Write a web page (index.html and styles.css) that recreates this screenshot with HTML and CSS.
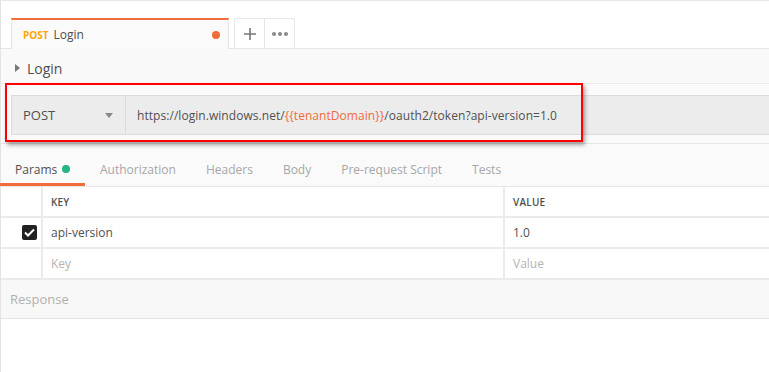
FILE: index.html
```html
<!DOCTYPE html>
<html>
  <head>
    <title>Login - Request</title>
    <link rel="stylesheet" href="styles.css">
  </head>
  <body>
    <div class="app">
      <div class="tab-strip">
        <div class="req-tab">
          <span class="method">POST</span>
          <span class="tab-name">Login</span>
          <span class="dirty"></span>
        </div>
        <div class="tab-actions">
          <span class="tab-btn">
            <svg width="14" height="14" viewBox="0 0 14 14"><path d="M7 1v12M1 7h12" stroke="#777" stroke-width="1.6"/></svg>
          </span>
          <span class="tab-btn">
            <svg width="18" height="6" viewBox="0 0 18 6"><circle cx="3" cy="3" r="2" fill="#888"/><circle cx="9" cy="3" r="2" fill="#888"/><circle cx="15" cy="3" r="2" fill="#888"/></svg>
          </span>
        </div>
      </div>

      <div class="req-name">
        <span class="caret-right"></span>
        <span>Login</span>
      </div>

      <div class="url-area">
        <div class="url-bar">
          <div class="method-select">
            <span>POST</span>
            <span class="caret-down"></span>
          </div>
          <div class="url-input">https://login.windows.net/<span class="var">{{tenantDomain}}</span>/oauth2/token?api-version=1.0</div>
        </div>
        <div class="highlight"></div>
      </div>

      <nav class="sub-tabs">
        <span class="sub-tab active">Params <i class="dot"></i></span>
        <span class="sub-tab">Authorization</span>
        <span class="sub-tab">Headers</span>
        <span class="sub-tab">Body</span>
        <span class="sub-tab">Pre-request Script</span>
        <span class="sub-tab">Tests</span>
      </nav>

      <div class="params">
        <div class="row head">
          <div class="cell check"></div>
          <div class="cell key">KEY</div>
          <div class="cell value">VALUE</div>
        </div>
        <div class="row">
          <div class="cell check">
            <span class="box">
              <svg width="11" height="9" viewBox="0 0 11 9"><path d="M1 4.5l3 3L10 1.5" stroke="#fff" stroke-width="2" fill="none"/></svg>
            </span>
          </div>
          <div class="cell key">api-version</div>
          <div class="cell value">1.0</div>
        </div>
        <div class="row">
          <div class="cell check"></div>
          <div class="cell key placeholder">Key</div>
          <div class="cell value placeholder">Value</div>
        </div>
      </div>

      <div class="response">Response</div>
    </div>
  </body>
</html>
```

FILE: styles.css
```css
html,
body {
  margin: 0;
  background: #fff;
}
body {
  font-family: "Open Sans", "Noto Sans", sans-serif;
  color: #505050;
  width: 769px;
  height: 372px;
  overflow: hidden;
}
.app {
  border-top: 1px solid #e8e8e8;
  border-left: 1px solid #e3e3e3;
  height: 371px;
}

/* tab strip */
.tab-strip {
  display: flex;
  align-items: flex-end;
  height: 47px;
  padding-left: 10px;
}
.req-tab {
  display: flex;
  align-items: center;
  box-sizing: border-box;
  width: 218px;
  height: 31px;
  padding: 0 8px 0 11px;
  background: #fafafa;
  border-top: 2px solid #f26b3a;
  border-left: 1px solid #e6e6e6;
  border-right: 1px solid #e6e6e6;
  margin-bottom: -1px;
  position: relative;
}
.method {
  color: #ffa500;
  font-size: 10px;
  font-weight: 700;
  margin-right: 5px;
}
.tab-name {
  font-size: 12px;
  flex: 1;
}
.dirty {
  width: 8px;
  height: 8px;
  border-radius: 50%;
  background: #f26b3a;
}
.tab-actions {
  display: flex;
  margin-left: 5px;
  height: 30px;
  border: 1px solid #e6e6e6;
  border-bottom: none;
  border-radius: 3px 3px 0 0;
  box-sizing: border-box;
}
.tab-btn {
  width: 29px;
  display: flex;
  align-items: center;
  justify-content: center;
}
.tab-btn + .tab-btn {
  border-left: 1px solid #e6e6e6;
}

/* request name */
.req-name {
  display: flex;
  align-items: center;
  box-sizing: border-box;
  height: 36px;
  padding: 4px 0 0 14px;
  background: #f9f9f9;
  border-top: 1px solid #e6e6e6;
  border-bottom: 1px solid #ebebeb;
  font-size: 14px;
  color: #505050;
}
.caret-right {
  width: 0;
  height: 0;
  border-top: 4px solid transparent;
  border-bottom: 4px solid transparent;
  border-left: 5px solid #777;
  margin-right: 7px;
}

/* url bar */
.url-area {
  position: relative;
  background: #fafafa;
  padding: 11px 0 8px 10px;
  border-bottom: 1px solid #e6e6e6;
}
.url-bar {
  display: flex;
  height: 38px;
  border: 1px solid #dcdcdc;
  border-right: none;
  background: #ececec;
  font-size: 12px;
}
.method-select {
  display: flex;
  align-items: center;
  justify-content: space-between;
  width: 114px;
  box-sizing: border-box;
  padding: 0 12px 0 11px;
  border-right: 1px solid #dcdcdc;
  font-size: 13px;
}
.caret-down {
  width: 0;
  height: 0;
  border-left: 4px solid transparent;
  border-right: 4px solid transparent;
  border-top: 5px solid #888;
}
.url-input {
  display: flex;
  align-items: center;
  padding-left: 11px;
  color: #505050;
  letter-spacing: 0.05px;
}
.var {
  color: #f26b3a;
}
.highlight {
  position: absolute;
  left: 4px;
  top: -1px;
  width: 578px;
  height: 59px;
  box-sizing: border-box;
  border: 2px solid #f00;
  box-shadow: 2px 3px 4px rgba(0, 0, 0, 0.35);
}

/* sub tabs */
.sub-tabs {
  display: flex;
  height: 42px;
  background: #fafafa;
  border-bottom: 1px solid #e6e6e6;
  font-size: 12px;
}
.sub-tab {
  display: flex;
  align-items: center;
  padding: 11px 15px 0 15px;
  color: #a7a7a7;
  box-sizing: border-box;
  border-bottom: 3px solid transparent;
}
.sub-tab.active {
  color: #505050;
  border-bottom-color: #f26b3a;
  width: 85px;
  margin-left: -1px;
}
.dot {
  display: inline-block;
  width: 8px;
  height: 8px;
  border-radius: 50%;
  background: #26b47f;
  margin-left: 5px;
}

/* params table */
.params {
  font-size: 12px;
}
.row {
  display: grid;
  grid-template-columns: 40px 460px 1fr;
  column-gap: 2px;
  background: #ebebeb;
  padding-bottom: 2px;
}
.cell {
  background: #fff;
  height: 29px;
  display: flex;
  align-items: center;
  padding-left: 8px;
}
.row.head .cell {
  font-size: 10px;
  font-weight: 600;
  letter-spacing: 0.2px;
  color: #505050;
}
.cell.check {
  padding-left: 0;
  justify-content: flex-end;
  padding-right: 4px;
}
.box {
  width: 15px;
  height: 15px;
  border-radius: 2px;
  background: #222;
  display: flex;
  align-items: center;
  justify-content: center;
}
.placeholder {
  color: #b4b4b4;
}

/* response */
.response {
  height: 38px;
  display: flex;
  align-items: center;
  padding-left: 9px;
  background: #f8f8f8;
  border-bottom: 1px solid #e3e3e3;
  color: #b0b0b0;
  font-size: 13px;
}
```
